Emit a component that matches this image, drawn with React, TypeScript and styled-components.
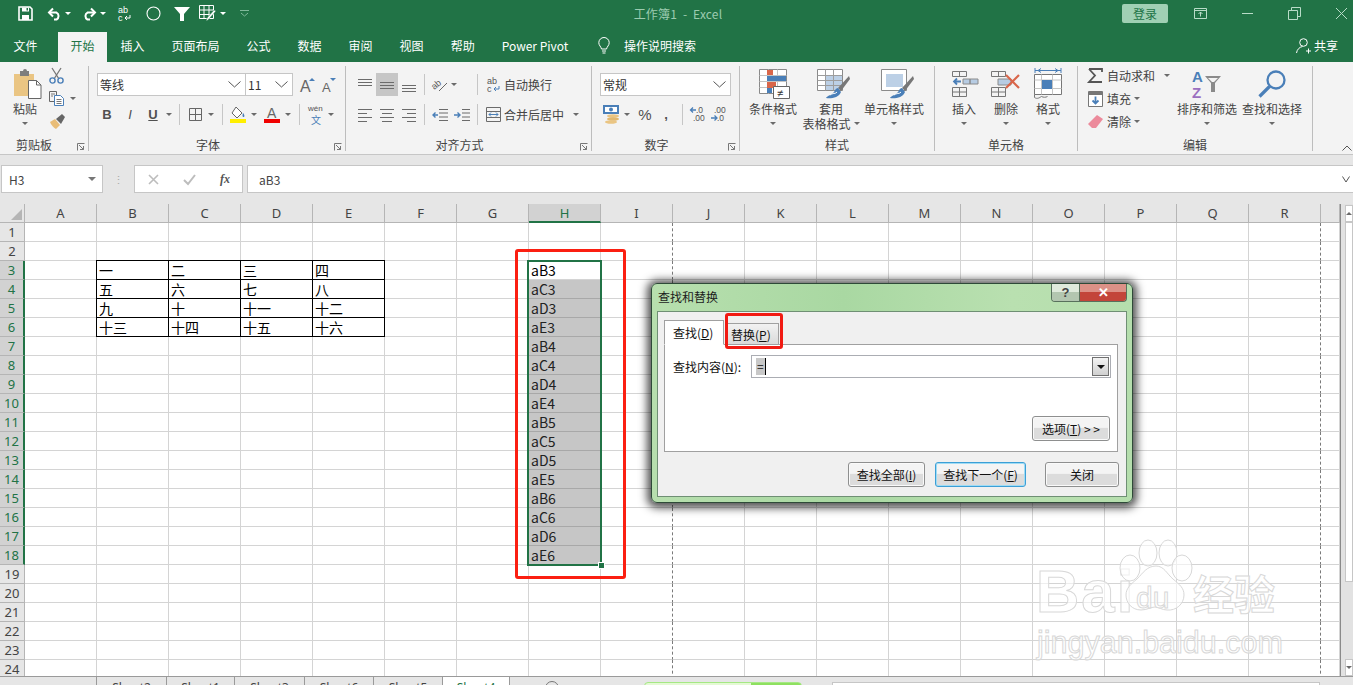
import React from 'react';
import styled, { createGlobalStyle } from 'styled-components';

const GREEN = '#217346';
const BLUE = '#4a7fb8';
const RED = '#d9664a';
const UI_FONT = '"Noto Sans CJK SC", "Noto Sans", sans-serif';

const GlobalStyle = createGlobalStyle`
  html, body { margin: 0; padding: 0; background: #fff; }
  body { font-family: ${UI_FONT}; font-size: 12px; color: #444; }
  * { box-sizing: border-box; }
`;

const Page = styled.div`
  position: relative;
  width: 1353px;
  height: 685px;
  overflow: hidden;
  display: flex;
  flex-direction: column;
  background: #fff;
`;

/* ---------- title bar ---------- */
const TitleBar = styled.div`
  height: 32px;
  flex: none;
  padding-bottom: 5px;
  background: ${GREEN};
  display: grid;
  grid-template-columns: 1fr auto 1fr;
  align-items: center;
`;
const Qat = styled.div`
  display: flex;
  align-items: center;
  padding-left: 18px;
`;
const QatSlot = styled.div<{ $ml?: number }>`
  display: flex;
  margin-left: ${(p) => p.$ml ?? 0}px;
`;
const WhiteCaret = styled.span<{ $ml?: number }>`
  width: 0;
  height: 0;
  margin-left: ${(p) => p.$ml ?? 3}px;
  border: 3px solid transparent;
  border-top: 3px solid #fff;
  border-bottom: 0;
`;
const WindowTitle = styled.div`
  color: #9ccbb0;
  font-size: 12px;
  margin-left: 3px;
  letter-spacing: 0.2px;
  white-space: pre;
`;
const WindowControls = styled.div`
  display: flex;
  align-items: center;
  justify-content: flex-end;
  padding-right: 5px;
`;
const LoginButton = styled.div`
  width: 46px;
  height: 19px;
  line-height: 19px;
  margin-right: 26px;
  border-radius: 2px;
  text-align: center;
  background: #a0d0b4;
  color: ${GREEN};
`;
const WinIcon = styled.svg<{ $ml?: number }>`
  width: 13px;
  height: 13px;
  margin-left: ${(p) => p.$ml ?? 0}px;
  fill: none;
  stroke: #b9dcc8;
`;

/* ---------- tabs ---------- */
const TabRow = styled.div`
  height: 30px;
  flex: none;
  background: ${GREEN};
  display: flex;
  align-items: stretch;
`;
const Tab = styled.div<{ $active?: boolean; $ml?: number }>`
  display: flex;
  align-items: center;
  padding: 0 ${(p) => (p.$active ? 12.5 : 13.5)}px 3px;
  margin-left: ${(p) => p.$ml ?? 0}px;
  background: ${(p) => (p.$active ? '#f3f3f3' : 'transparent')};
  color: ${(p) => (p.$active ? GREEN : '#fff')};
  white-space: nowrap;
`;
const SearchHint = styled.div`
  display: flex;
  align-items: center;
  gap: 14px;
  margin-left: 16px;
  padding-bottom: 3px;
  color: #fff;
`;
const ShareButton = styled.div`
  margin-left: auto;
  padding: 0 15px 3px 0;
  display: flex;
  align-items: center;
  gap: 3px;
  color: #fff;
`;

/* ---------- ribbon ---------- */
const Ribbon = styled.div`
  position: relative;
  height: 93px;
  flex: none;
  padding-top: 4px;
  background: #f3f3f3;
  border-bottom: 1px solid #c6c6c6;
  display: flex;
`;
const Group = styled.div<{ $w: number }>`
  width: ${(p) => p.$w}px;
  height: 85px;
  border-right: 1px solid #bdbdbd;
  display: flex;
  flex-direction: column;
  flex: none;
`;
const GroupBody = styled.div<{ $pl?: number }>`
  height: 72px;
  padding-left: ${(p) => p.$pl ?? 0}px;
  display: flex;
  align-items: flex-start;
`;
const GroupBodyStacked = styled.div<{ $pl: number }>`
  height: 72px;
  padding: 7px 0 0 ${(p) => p.$pl}px;
`;
const GroupFoot = styled.div<{ $pr?: number }>`
  position: relative;
  height: 13px;
  line-height: 14px;
  text-align: center;
  padding-right: ${(p) => p.$pr ?? 0}px;
`;
const Launcher = styled.svg`
  position: absolute;
  right: 3px;
  bottom: 0;
  width: 8px;
  height: 8px;
  fill: none;
  stroke: #777;
`;
const ToolRow = styled.div<{ $mt?: number }>`
  display: flex;
  align-items: center;
  height: 23px;
  margin-top: ${(p) => p.$mt ?? 0}px;
`;
const Combo = styled.div<{ $w: number; $ml?: number }>`
  width: ${(p) => p.$w}px;
  height: 23px;
  flex: none;
  margin-left: ${(p) => p.$ml ?? 0}px;
  padding: 0 4px 0 2px;
  background: #fff;
  border: 1px solid #c6c6c6;
  display: flex;
  align-items: center;
  justify-content: space-between;
  color: #333;
`;
const Tool = styled.div<{ $w?: number; $ml?: number; $active?: boolean }>`
  width: ${(p) => p.$w ?? 22}px;
  height: 23px;
  margin-left: ${(p) => p.$ml ?? 0}px;
  flex: none;
  display: flex;
  align-items: center;
  justify-content: center;
  background: ${(p) => (p.$active ? '#c6c6c6' : 'transparent')};
`;
const Glyph = styled.span<{ $bold?: boolean; $italic?: boolean; $under?: boolean; $big?: boolean }>`
  font-family: "Liberation Sans", sans-serif;
  font-size: ${(p) => (p.$big ? 15 : 13)}px;
  color: #505050;
  font-weight: ${(p) => (p.$bold ? 700 : 400)};
  font-style: ${(p) => (p.$italic ? 'italic' : 'normal')};
  text-decoration: ${(p) => (p.$under ? 'underline' : 'none')};
`;
const Caret = styled.span<{ $ml?: number; $up?: boolean }>`
  flex: none;
  width: 0;
  height: 0;
  margin-left: ${(p) => p.$ml ?? 2}px;
  border: 3px solid transparent;
  border-top: ${(p) => (p.$up ? '0' : '3px solid #6a6a6a')};
  border-bottom: ${(p) => (p.$up ? '3px solid #6a6a6a' : '0')};
`;
const NameCaret = styled.span`
  width: 0;
  height: 0;
  border: 4px solid transparent;
  border-top: 4px solid #777;
  border-bottom: 0;
`;
const VSep = styled.span<{ $ml?: number }>`
  flex: none;
  width: 1px;
  height: 21px;
  margin-left: ${(p) => p.$ml ?? 0}px;
  background: #c6c6c6;
`;
const ToolText = styled.span<{ $ml?: number }>`
  margin-left: ${(p) => p.$ml ?? 0}px;
  white-space: nowrap;
  color: #444;
`;
const BigTool = styled.div<{ $w: number; $ml?: number }>`
  width: ${(p) => p.$w}px;
  margin-left: ${(p) => p.$ml ?? 0}px;
  flex: none;
  display: flex;
  flex-direction: column;
  align-items: center;
`;
const BigIcon = styled.div<{ $shift?: number }>`
  height: 35px;
  padding-left: ${(p) => p.$shift ?? 0}px;
  display: flex;
  align-items: center;
  justify-content: center;
`;
const BigLabel = styled.div`
  height: 15px;
  line-height: 15px;
  white-space: nowrap;
  display: flex;
  align-items: center;
  justify-content: center;
`;
const CaretLine = styled.div`
  height: 15px;
  display: flex;
  align-items: center;
`;
const SmallColumn = styled.div<{ $w: number; $pl?: number; $mt?: number }>`
  width: ${(p) => p.$w}px;
  flex: none;
  padding-left: ${(p) => p.$pl ?? 0}px;
  margin-top: ${(p) => p.$mt ?? 0}px;
  display: flex;
  flex-direction: column;
`;
const CollapseIcon = styled.svg`
  position: absolute;
  right: 1px;
  bottom: 3px;
  width: 10px;
  height: 6px;
  fill: none;
  stroke: #555;
`;

/* ---------- formula bar ---------- */
const FormulaBar = styled.div`
  height: 49px;
  flex: none;
  padding: 10px 0 11px 1px;
  background: #e6e6e6;
  display: flex;
`;
const NameBox = styled.div`
  width: 102px;
  background: #fff;
  border: 1px solid #c6c6c6;
  padding: 0 6px 0 7px;
  display: flex;
  align-items: center;
  justify-content: space-between;
  color: #444;
`;
const GripDots = styled.div`
  width: 31px;
  display: flex;
  align-items: center;
  justify-content: center;
  color: #aaa;
  font-size: 11px;
`;
const FxButtons = styled.div`
  width: 109px;
  background: #fff;
  border: 1px solid #c6c6c6;
  display: grid;
  grid-template-columns: repeat(3, 36px);
  align-items: center;
  justify-items: center;
  font-family: "Liberation Serif", serif;
  font-style: italic;
  font-weight: 700;
  color: #555;
`;
const FormulaInput = styled.div`
  flex: 1;
  margin-left: 4px;
  background: #fff;
  border-top: 1px solid #c6c6c6;
  border-bottom: 1px solid #c6c6c6;
  border-left: 1px solid #c6c6c6;
  padding: 0 3px 0 11px;
  display: flex;
  align-items: center;
  justify-content: space-between;
  color: #444;
`;

/* ---------- sheet ---------- */
const SheetArea = styled.div`
  position: relative;
  height: 472px;
  flex: none;
  display: flex;
  background: #fff;
`;
const SheetGrid = styled.div`
  width: 1341px;
  height: 472px;
  overflow: hidden;
  border-right: 1px solid #8a8a8a;
  display: grid;
  grid-template-columns: 25px repeat(18, 72px) 19px;
  grid-auto-rows: 19px;
  font-size: 14px;
  color: #000;
`;
const Corner = styled.div`
  background: #e6e6e6;
  border-right: 1px solid #b5b5b5;
  border-bottom: 1px solid #b5b5b5;
  display: flex;
  align-items: flex-end;
  justify-content: flex-end;
  padding: 0 2px 2px 0;
`;
const ColHead = styled.div<{ $on?: boolean }>`
  background: ${(p) => (p.$on ? '#d2d2d2' : '#e6e6e6')};
  color: ${(p) => (p.$on ? GREEN : '#444')};
  border-right: 1px solid #b5b5b5;
  border-bottom: ${(p) => (p.$on ? `2px solid ${GREEN}` : '1px solid #b5b5b5')};
  font-family: "Noto Sans", sans-serif;
  font-size: 13px;
  line-height: 18px;
  text-align: center;
`;
const RowHead = styled.div<{ $on?: boolean }>`
  background: ${(p) => (p.$on ? '#d2d2d2' : '#e6e6e6')};
  color: ${(p) => (p.$on ? GREEN : '#444')};
  border-right: ${(p) => (p.$on ? `2px solid ${GREEN}` : '1px solid #b5b5b5')};
  border-bottom: 1px solid #b5b5b5;
  font-family: "Noto Sans", sans-serif;
  font-size: 13px;
  line-height: 18px;
  text-align: center;
`;
const Cell = styled.div<{ $boxed?: boolean; $dashed?: boolean; $shaded?: boolean }>`
  padding-left: 2px;
  line-height: 19px;
  overflow: hidden;
  white-space: nowrap;
  color: ${(p) => (p.$shaded ? '#222' : '#000')};
  border-right: 1px ${(p) => (p.$dashed ? 'dashed #7a7a7a' : 'solid #d4d4d4')};
  border-bottom: 1px solid #d4d4d4;
  ${(p) => p.$boxed && 'border-color: #000; box-shadow: -1px 0 #000, 0 -1px #000, -1px -1px #000;'}
  ${(p) =>
    p.$shaded &&
    'background: #c6c6c6; border-right-color: #c6c6c6; border-bottom-color: #a8a8a8;'}
`;
const SelectionFrame = styled.div`
  position: absolute;
  left: 527px;
  top: 56px;
  width: 75px;
  height: 306px;
  border: 2px solid ${GREEN};
`;
const FillHandle = styled.span`
  position: absolute;
  right: -5px;
  bottom: -5px;
  width: 7px;
  height: 7px;
  background: ${GREEN};
  border: 1px solid #fff;
`;
const RedFrame = styled.div`
  position: absolute;
  left: 515px;
  top: 45px;
  width: 111px;
  height: 330px;
  border: 3px solid #fb1f11;
  border-radius: 3px;
`;
const VScroll = styled.div`
  width: 12px;
  height: 472px;
  padding-left: 4px;
  background: #e2e2e2;
  display: flex;
  flex-direction: column;
`;
const VScrollThumb = styled.div`
  height: 360px;
  background: #fff;
  border: 1px solid #c6c6c6;
`;
const VScrollButton = styled.div<{ $up?: boolean }>`
  height: 17px;
  flex: none;
  margin-top: ${(p) => (p.$up ? '1px' : 'auto')};
  background: #fff;
  border: 1px solid #c6c6c6;
  display: flex;
  align-items: center;
  justify-content: center;
`;

/* ---------- sheet tabs ---------- */
const StatusBar = styled.div`
  height: 9px;
  flex: none;
  overflow: hidden;
  background: #e6e6e6;
  border-top: 1px solid #9a9a9a;
  display: flex;
  align-items: flex-start;
  padding-left: 96px;
`;
const SheetTab = styled.div<{ $w: number; $active?: boolean }>`
  width: ${(p) => p.$w}px;
  height: 20px;
  flex: none;
  padding-top: 4px;
  text-align: center;
  line-height: 14px;
  font-family: "Noto Sans", sans-serif;
  font-size: 12px;
  background: ${(p) => (p.$active ? '#fff' : 'transparent')};
  color: ${(p) => (p.$active ? GREEN : '#444')};
  border-left: 1px solid #9a9a9a;
  border-right: ${(p) => (p.$active ? '1px solid #9a9a9a' : '0')};
`;
const AddSheet = styled.span`
  width: 14px;
  height: 14px;
  flex: none;
  margin: 4px 0 0 35px;
  border: 1px solid #777;
  border-radius: 50%;
`;
const GlitchBar = styled.span`
  width: 158px;
  height: 6px;
  flex: none;
  margin: 5px 0 0 85px;
  border-radius: 4px 4px 0 0;
  background: linear-gradient(90deg, #e4f9d4 0 68%, #8ee060 68% 100%);
  border: 1px solid #a5e884;
`;
const HScroll = styled.span`
  width: 488px;
  height: 6px;
  flex: none;
  margin: 5px 0 0 30px;
  background: #fff;
  border: 1px solid #c6c6c6;
`;

/* ---------- dialog ---------- */
const Dialog = styled.div`
  position: absolute;
  left: 651px;
  top: 283px;
  width: 482px;
  height: 220px;
  padding: 0 5px 5px;
  border: 1px solid #2e4a38;
  border-radius: 6px;
  background: linear-gradient(90deg, #b7dfae 0%, #a9d8a2 40%, #b9e0b0 75%, #b5dead 100%);
  box-shadow: 0 1px 8px 4px rgba(0, 0, 0, 0.68);
  display: flex;
  flex-direction: column;
  color: #111;
`;
const DialogTitleRow = styled.div`
  height: 27px;
  flex: none;
  display: flex;
  justify-content: space-between;
  align-items: flex-start;
`;
const DialogTitle = styled.div`
  margin: 4px 0 0 1px;
  color: #1c1c1c;
`;
const CaptionButtons = styled.div`
  display: flex;
  height: 18px;
  border: 1px solid #58705c;
  border-top: 0;
  border-radius: 0 0 4px 4px;
  overflow: hidden;
`;
const CaptionButton = styled.div<{ $close?: boolean; $w: number }>`
  width: ${(p) => p.$w}px;
  display: flex;
  align-items: center;
  justify-content: center;
  font-family: "Liberation Sans", sans-serif;
  font-weight: 700;
  font-size: 13px;
  line-height: 1;
  color: ${(p) => (p.$close ? '#fff' : '#444')};
  background: ${(p) =>
    p.$close
      ? 'linear-gradient(#dc9187 0 45%, #c3453a 50% 100%)'
      : 'linear-gradient(#dfeadc 0 45%, #b3c6b0 50% 100%)'};
  border-left: ${(p) => (p.$close ? '1px solid #58705c' : '0')};
`;
const DialogInner = styled.div`
  flex: 1;
  background: #f0f0f0;
  border: 1px solid #6f8f74;
  padding: 8px 8px 0 6px;
  position: relative;
  display: flex;
  flex-direction: column;
`;
const DialogTabs = styled.div`
  height: 25px;
  flex: none;
  display: flex;
  align-items: flex-end;
  position: relative;
  z-index: 1;
  margin-bottom: -1px;
`;
const DialogTab = styled.div<{ $active?: boolean }>`
  height: ${(p) => (p.$active ? 25 : 22)}px;
  width: ${(p) => (p.$active ? 60 : 54)}px;
  padding-left: ${(p) => (p.$active ? 8 : 5)}px;
  line-height: ${(p) => (p.$active ? 23 : 21)}px;
  border: 1px solid #a0a0a0;
  border-bottom: ${(p) => (p.$active ? '1px solid #fff' : '1px solid #a0a0a0')};
  margin-left: ${(p) => (p.$active ? 0 : 1)}px;
  background: ${(p) => (p.$active ? '#fff' : 'linear-gradient(#f2f2f2, #dadada)')};
  color: #111;
`;
const DialogPanel = styled.div`
  height: 108px;
  flex: none;
  background: #fff;
  border: 1px solid #a0a0a0;
  padding: 10px 6px 10px 8px;
  display: flex;
  flex-direction: column;
`;
const FindRow = styled.div`
  display: flex;
  align-items: center;
  height: 23px;
`;
const FindLabel = styled.div`
  width: 78px;
  flex: none;
`;
const FindInput = styled.div`
  flex: 1;
  height: 23px;
  border: 1px solid #abadb3;
  padding: 0 1px 0 4px;
  display: flex;
  align-items: center;
  justify-content: space-between;
`;
const SelectedText = styled.span`
  display: inline-block;
  height: 17px;
  line-height: 16px;
  padding: 0 1px;
  background: #c8c8c8;
  border-right: 1px solid #000;
  color: #111;
`;
const DropButton = styled.div`
  width: 17px;
  height: 19px;
  border: 1px solid #707070;
  background: linear-gradient(#f3f3f3, #d0d0d0);
  display: flex;
  align-items: center;
  justify-content: center;
`;
const BlackCaret = styled.span`
  border: 4px solid transparent;
  border-top: 4px solid #111;
  border-bottom: 0;
`;
const WinButton = styled.div<{ $w: number; $primary?: boolean; $ml?: number }>`
  width: ${(p) => p.$w}px;
  height: 25px;
  margin-left: ${(p) => p.$ml ?? 0}px;
  border: 1px solid ${(p) => (p.$primary ? '#3c9fd6' : '#8e8f8f')};
  border-radius: 3px;
  background: linear-gradient(#f4f4f4 0 45%, #dcdcdc 50% 100%);
  box-shadow: ${(p) => (p.$primary ? 'inset 0 0 0 1px #9fdcf5' : 'inset 0 0 0 1px #fafafa')};
  display: flex;
  align-items: center;
  justify-content: center;
  color: #111;
  white-space: pre;
`;
const OptionsRow = styled.div`
  margin-top: auto;
  padding-right: 1px;
  display: flex;
  justify-content: flex-end;
`;
const DialogFooter = styled.div`
  margin: 10px -1px 0 0;
  display: flex;
  justify-content: flex-end;
`;
const TabHighlight = styled.div`
  position: absolute;
  left: 67px;
  top: 1px;
  width: 58px;
  height: 36px;
  border: 3px solid #f11a12;
  border-radius: 3px;
  z-index: 2;
`;

/* ---------- watermark ---------- */
const Watermark = styled.div`
  position: absolute;
  left: 1036px;
  top: 340px;
  width: 250px;
  height: 120px;
  pointer-events: none;
  color: rgba(255, 255, 255, 0.6);
  -webkit-text-stroke: 1px #d8d8d8;
`;
const MarkBai = styled.span`
  position: absolute;
  left: 0;
  top: 18px;
  font: 700 60px/60px "Liberation Sans", sans-serif;
  letter-spacing: 2px;
`;
const MarkJing = styled.span`
  position: absolute;
  left: 157px;
  top: 24px;
  font: 700 41px/48px "Noto Sans CJK SC", sans-serif;
`;
const MarkUrl = styled.span`
  position: absolute;
  left: 1px;
  top: 78px;
  font: 400 30.5px/40px "Liberation Sans", sans-serif;
`;
const MarkPaw = styled.svg`
  position: absolute;
  left: 84px;
  top: -4px;
  width: 76px;
  height: 76px;
  fill: rgba(255, 255, 255, 0.6);
  stroke: #d8d8d8;
  overflow: visible;
`;
const MarkDu = styled.span`
  position: absolute;
  left: 100px;
  top: 38px;
  font: 400 30px/32px "Liberation Sans", sans-serif;
`;

/* ---------- icons ---------- */
const Svg = ({ w, h, children }: { w: number; h: number; children: React.ReactNode }) => (
  <svg width={w} height={h} viewBox={`0 0 ${w} ${h}`} fill="none" style={{ display: 'block', overflow: 'visible' }}>
    {children}
  </svg>
);

const SaveIcon = () => (
  <Svg w={15} h={15}>
    <path d="M1 1h11l2 2v11H1z" stroke="#fff" strokeWidth="1.6" />
    <path d="M4 1.5h7v4H4zM4 9h7v5H4z" fill="#fff" />
    <path d="M8.5 2h1.5v2.5H8.5z" fill={GREEN} />
  </Svg>
);
const UndoIcon = ({ flip }: { flip?: boolean }) => (
  <Svg w={15} h={13}>
    <g transform={flip ? 'translate(15 0) scale(-1 1)' : undefined} stroke="#fff" strokeWidth="2">
      <path d="M6 1.5 2 5.5l4 4" />
      <path d="M2.5 5.5h7a4 4 0 0 1 0 7H7" />
    </g>
  </Svg>
);
const WrapTextIcon = ({ color, accent }: { color: string; accent: string }) => (
  <Svg w={13} h={15}>
    <text x="0" y="7" fontSize="9" fontFamily="Liberation Sans" fill={color}>ab</text>
    <text x="0" y="15" fontSize="9" fontFamily="Liberation Sans" fill={color}>c</text>
    <path d="M12 9v3H7m2-2-2 2 2 2" stroke={accent} />
  </Svg>
);
const CircleIcon = () => (
  <Svg w={15} h={15}>
    <circle cx="7.5" cy="7.5" r="6.5" stroke="#fff" strokeWidth="1.1" />
  </Svg>
);
const FunnelIcon = () => (
  <Svg w={16} h={15}>
    <path d="M0 1h16L10 8v7H6V8z" fill="#fff" />
  </Svg>
);
const GridBrushIcon = () => (
  <Svg w={18} h={17}>
    <path d="M.5.5h14v13H.5zM5 .5v13M10 .5v13M.5 5h14M.5 9.5h14" stroke="#fff" />
    <path d="M17 6 9 15l-2 1 1-3 7-8z" fill="#fff" stroke={GREEN} strokeWidth=".5" />
  </Svg>
);
const CustomizeIcon = () => (
  <Svg w={9} h={7}>
    <path d="M0 .5h9M1 3l3.5 3L8 3" stroke="#7fb99a" />
  </Svg>
);
const BulbIcon = () => (
  <Svg w={12} h={17}>
    <path d="M3.5 12C3 9.5.8 8.5.8 5.7a5.2 5.2 0 0 1 10.4 0c0 2.800-2.200 3.800-2.700 6.300z" stroke="#fff" />
    <path d="M4 14h4M4.500 16h3" stroke="#fff" />
  </Svg>
);
const ShareIcon = () => (
  <Svg w={15} h={16}>
    <circle cx="7.500" cy="4.500" r="3.800" stroke="#fff" />
    <path d="M.5 15c.5-3.500 3-6 6-6.500M10 13h5M12.500 10.500v5" stroke="#fff" />
  </Svg>
);
const PasteIcon = () => (
  <Svg w={29} h={31}>
    <path d="M1 6h20v22H1z" fill="#eac583" />
    <path d="M7 3h3a2 2 0 0 1 4 0h2v5H7z" fill="#7d7d7d" />
    <path d="M15.500 12.500h8l4.500 4.500v13.500H15.500z" fill="#fff" stroke="#666" />
    <path d="M23.500 12.500V17H28" stroke="#666" />
  </Svg>
);
const CutIcon = () => (
  <Svg w={15} h={16}>
    <path d="M3 0l7 11M12 0 5 11" stroke="#777" strokeWidth="1.300" />
    <circle cx="3.500" cy="12.500" r="2.600" stroke={BLUE} strokeWidth="1.400" />
    <circle cx="11.500" cy="12.500" r="2.600" stroke={BLUE} strokeWidth="1.400" />
  </Svg>
);
const CopyIcon = () => (
  <Svg w={15} h={15}>
    <path d="M.5.500h7v10h-7z" fill="#f3f3f3" stroke="#666" />
    <path d="M5.500 4.500h6l3 3v7h-9z" fill="#fff" stroke={BLUE} />
    <path d="M2 3h4M2 5h2M7.500 8.500h5M7.500 10.500h5M7.500 12.500h5" stroke="#777" />
  </Svg>
);
const BrushIcon = () => (
  <Svg w={16} h={15}>
    <path d="M1 8l5-3 5 6-4 4C5 14 2 11 1 8z" fill="#e9bd77" />
    <path d="M7 5l6-5 3 3-4 7z" fill="#666" />
  </Svg>
);
const GrowFontIcon = ({ shrink }: { shrink?: boolean }) => (
  <Svg w={15} h={15}>
    <text x="0" y="15" fontSize={shrink ? 13 : 16} fontFamily="Liberation Sans" fill="#666">A</text>
    <path d={shrink ? 'M8 1h6l-3 3z' : 'M9 4h6l-3-3z'} fill={BLUE} />
  </Svg>
);
const BordersIcon = () => (
  <Svg w={13} h={13}>
    <path d="M.5.500h12v12H.500zM6.500.500v12M.500 6.500h12" stroke="#666" />
  </Svg>
);
const FillColorIcon = () => (
  <Svg w={16} h={17}>
    <path d="M6 1l6 6-5 5-5-5z" fill="#fff" stroke="#666" />
    <path d="M13 7c1.500 1.500 2 4 .5 4s-1-2.500-.5-4z" fill={BLUE} />
    <path d="M0 13h16v4H0z" fill="#ffef00" />
  </Svg>
);
const FontColorIcon = () => (
  <Svg w={16} h={17}>
    <text x="3" y="12" fontSize="14" fontFamily="Liberation Sans" fill="#666">A</text>
    <path d="M0 13h16v4H0z" fill="#f00000" />
  </Svg>
);
const PhoneticIcon = () => (
  <Svg w={16} h={18}>
    <text x="0" y="5" fontSize="8" fontFamily="Liberation Sans" fill="#555">wén</text>
    <text x="3" y="18" fontSize="10" fontFamily="Noto Sans CJK SC" fill={BLUE}>文</text>
  </Svg>
);
const LinesIcon = ({ rows, w = 14 }: { rows: [number, number, number][]; w?: number }) => (
  <Svg w={w} h={w}>
    {rows.map(([x, y, l], i) => (
      <path key={i} d={`M${x} ${y + 0.5}h${l}`} stroke="#6b6b6b" />
    ))}
  </Svg>
);
const OrientationIcon = () => (
  <Svg w={16} h={15}>
    <text x="0" y="11" fontSize="9" fontFamily="Liberation Sans" fill="#555" transform="rotate(-40 4 9)">ab</text>
    <path d="M7 14 15 6" stroke="#666" />
  </Svg>
);
const IndentIcon = ({ out }: { out?: boolean }) => (
  <Svg w={16} h={12}>
    <path d={out ? 'M7 .5h9M7 4h9M7 8h9M7 11.500h9' : 'M8 .5h8M8 4h8M8 8h8M8 11.500h8'} stroke="#6b6b6b" />
    <path d={out ? 'M6 6H1m2.500-2.500L1 6l2.500 2.500' : 'M0 6h6M3.500 3.500 6 6 3.500 8.500'} stroke={BLUE} strokeWidth="1.400" />
  </Svg>
);
const MergeIcon = () => (
  <Svg w={15} h={15}>
    <path d="M.5.500h14v14H.500zM.500 4.500h14M.500 10.500h14" stroke="#6b6b6b" />
    <path d="M3 7.500h9M5 5.500l-2 2 2 2M10 5.500l2 2-2 2" stroke={BLUE} />
  </Svg>
);
const ChevronDown = ({ w = 13 }: { w?: number }) => (
  <Svg w={w} h={7}>
    <path d={`M.5.500 ${w / 2} 6 ${w - 0.5} .5`} stroke="#555" />
  </Svg>
);
const AccountingIcon = () => (
  <Svg w={17} h={19}>
    <path d="M0 0h16v9H0z" fill={BLUE} />
    <path d="M2 2h12v5H2z" fill="#fff" />
    <circle cx="8" cy="4.500" r="2" fill={BLUE} />
    <ellipse cx="10" cy="11" rx="6" ry="1.800" fill="#eac583" />
    <ellipse cx="10" cy="14" rx="6" ry="1.800" fill="#e2b86e" />
    <ellipse cx="8" cy="17" rx="6" ry="1.800" fill="#eac583" />
  </Svg>
);
const DecimalIcon = ({ more }: { more?: boolean }) => (
  <Svg w={17} h={15}>
    <text x={more ? 3 : 6} y="6" fontSize="8.500" fontFamily="Liberation Sans" fill="#555">{more ? '.00' : '.0'}</text>
    <text x={more ? 6 : 3} y="14" fontSize="8.500" fontFamily="Liberation Sans" fill="#555">{more ? '.0' : '.00'}</text>
    <path d={more ? 'M0 11h6M3.500 8.500 6 11l-2.500 2.500' : 'M6 3H.5M3 .5.500 3 3 5.500'} stroke={BLUE} strokeWidth="1.300" />
  </Svg>
);
const CondFormatIcon = () => (
  <Svg w={31} h={30}>
    <path d="M.5.500h27v24H.500z" fill="#fff" stroke="#8a8a8a" />
    <path d="M9.500.500v24M18.500.500v24M.500 6.500h27M.500 12.500h27M.500 18.500h27" stroke="#c4c4c4" />
    <path d="M8 1h6v5H8zM8 13h9v6H8z" fill={RED} />
    <path d="M8 7h19v5H8zM8 19h5v5H8z" fill={BLUE} />
    <path d="M14.500 17.500h16v12h-16z" fill="#fff" stroke="#666" />
    <text x="18" y="28" fontSize="11" fontFamily="Liberation Sans" fill="#333">≠</text>
  </Svg>
);
const TableFormatIcon = ({ cellOnly }: { cellOnly?: boolean }) => (
  <Svg w={34} h={30}>
    <path d="M.5.500h25v21H.500z" fill="#fff" stroke="#8a8a8a" />
    <path d={cellOnly ? 'M5 5h17v13H5z' : 'M8 6h17v15H8z'} fill="#bcd0e6" />
    {!cellOnly && <path d="M8.500.500v21M16.500.500v21M.500 6.500h25M.500 11.500h25M.500 16.500h25" stroke="#9d9d9d" />}
    <path d="M32 7 21 19l3 3 9-12z" fill="#777" />
    <path d="M21 19c-3 0-3 4-5 5-2 2-6 3-7 5 4 1 13 0 15-6z" fill={BLUE} />
    <path d="M13 26c2-2 6-1 7-3" stroke="#fff" />
  </Svg>
);
const InsertIcon = ({ remove }: { remove?: boolean }) => (
  <Svg w={30} h={26}>
    <path d="M.5.500h14v5H.500zM7.500.500v5M.500 16.500h14v9H.500zM.500 21h14M7.500 16.500v9" stroke="#777" />
    {remove ? (
      <>
        <path d="M7 8h13v6H7z" fill="#b7cce3" stroke="#8a8a8a" />
        <path d="M15 4l13 13M28 4 15 17" stroke={RED} strokeWidth="2.200" />
      </>
    ) : (
      <>
        <path d="M11 8h7v5h-7zM18 8h8v5h-8z" fill="#b7cce3" stroke="#8a8a8a" />
        <path d="M9 10.500H2M5 7.500l-3 3 3 3" stroke={BLUE} strokeWidth="1.800" />
      </>
    )}
  </Svg>
);
const FormatCellsIcon = () => (
  <Svg w={28} h={34}>
    <path d="M1 3.500h26M1 1v5M27 1v5M4 3.500l3-2M4 3.500l3 2M24 3.500l-3-2M24 3.500l-3 2" stroke={BLUE} />
    <path d="M.5 7.500h27v20H.500z" fill="#fff" stroke="#777" />
    <path d="M7.500 7.500v20M18.500 7.500v20M.500 13h27M.500 21.500h27" stroke="#c4c4c4" />
    <path d="M8 13h10v9H8z" fill={BLUE} />
    <path d="M.5 27.500v3c3 2 5 0 7-1 2 1 4 1 6 0" stroke="#777" />
  </Svg>
);
const SumIcon = () => (
  <Svg w={15} h={15}>
    <path d="M1 1h13v3M14 14H1l6-6.500L1 1" stroke="#555" strokeWidth="1.800" />
  </Svg>
);
const FillDownIcon = () => (
  <Svg w={15} h={16}>
    <path d="M.5.500h14v15H.500z" fill="#fff" stroke="#777" />
    <path d="M1 1h13v3H1z" fill="#777" />
    <path d="M7.500 5.500v7M4.500 9.500l3 3 3-3" stroke={BLUE} strokeWidth="1.800" />
  </Svg>
);
const EraserIcon = () => (
  <Svg w={15} h={13}>
    <path d="M9 0l6 4-7 9H4L0 9z" fill="#ec8a9b" />
  </Svg>
);
const SortIcon = () => (
  <Svg w={30} h={31}>
    <text x="0" y="14" fontSize="15" fontWeight="700" fontFamily="Liberation Sans" fill={BLUE}>A</text>
    <text x="0" y="30" fontSize="15" fontWeight="700" fontFamily="Liberation Sans" fill="#9b6fc0">Z</text>
    <path d="M13 8h16l-6 7v9h-4v-9z" fill="#8a8a8a" />
    <path d="M16 10h10l-4 4h-2z" fill="#f3f3f3" />
  </Svg>
);
const SearchIcon = () => (
  <Svg w={28} h={28}>
    <circle cx="18" cy="10" r="8.500" stroke={BLUE} strokeWidth="2.300" />
    <path d="M11.500 16.500 1.500 26.500" stroke={BLUE} strokeWidth="3.200" />
  </Svg>
);
const LauncherGlyph = () => (
  <Launcher viewBox="0 0 8 8">
    <path d="M.5 7.500v-7h7M2 2l4.500 4.500M3 6.500h3.500V3" />
  </Launcher>
);

/* ---------- data ---------- */
const COLS = 'ABCDEFGHIJKLMNOPQR'.split('');
const ROWS = Array.from({ length: 24 }, (_, i) => i + 1);
const TABLE: Record<string, string> = {
  B3: '一', C3: '二', D3: '三', E3: '四',
  B4: '五', C4: '六', D4: '七', E4: '八',
  B5: '九', C5: '十', D5: '十一', E5: '十二',
  B6: '十三', C6: '十四', D6: '十五', E6: '十六',
};
const SELECTION = [3, 4, 5, 6].flatMap((n) => ['B', 'C', 'D', 'E'].map((l) => `a${l}${n}`));
const isBoxed = (col: string, row: number) => 'BCDE'.includes(col) && row >= 3 && row <= 6;
const isSelected = (col: string, row: number) => col === 'H' && row >= 3 && row <= 18;

const VALIGN_TOP: [number, number, number][] = [[0, 1, 14], [0, 4, 14], [0, 7, 14]];
const VALIGN_MID: [number, number, number][] = [[0, 4, 14], [0, 7, 14], [0, 10, 14]];
const VALIGN_BOT: [number, number, number][] = [[0, 7, 14], [0, 10, 14], [0, 13, 14]];
const ALIGN_LEFT: [number, number, number][] = [[0, 1, 14], [0, 5, 9], [0, 9, 14], [0, 13, 9]];
const ALIGN_CENTER: [number, number, number][] = [[0, 1, 14], [2, 5, 10], [0, 9, 14], [2, 13, 10]];
const ALIGN_RIGHT: [number, number, number][] = [[0, 1, 14], [5, 5, 9], [0, 9, 14], [5, 13, 9]];

export default function App() {
  return (
    <Page>
      <GlobalStyle />
      <TitleBar>
        <Qat>
          <SaveIcon />
          <QatSlot $ml={14}><UndoIcon /></QatSlot>
          <WhiteCaret />
          <QatSlot $ml={11}><UndoIcon flip /></QatSlot>
          <WhiteCaret />
          <QatSlot $ml={12}><WrapTextIcon color="#fff" accent="#fff" /></QatSlot>
          <QatSlot $ml={15}><CircleIcon /></QatSlot>
          <QatSlot $ml={13}><FunnelIcon /></QatSlot>
          <QatSlot $ml={9}><GridBrushIcon /></QatSlot>
          <WhiteCaret />
          <QatSlot $ml={14}><CustomizeIcon /></QatSlot>
        </Qat>
        <WindowTitle>工作簿1  -  Excel</WindowTitle>
        <WindowControls>
          <LoginButton>登录</LoginButton>
          <WinIcon viewBox="0 0 13 13"><path d="M.5 1.500h12v10H.500zM.500 3.500h12M6.500 9.500V5M4.500 7l2-2 2 2" /></WinIcon>
          <WinIcon viewBox="0 0 13 13" $ml={34}><path d="M1 6.500h11" /></WinIcon>
          <WinIcon viewBox="0 0 13 13" $ml={34}><path d="M.5 3.500h9v9h-9zM3.500 3.500v-3h9v9h-3" /></WinIcon>
          <WinIcon viewBox="0 0 13 13" $ml={34}><path d="M1 1l11 11M12 1 1 12" /></WinIcon>
        </WindowControls>
      </TitleBar>

      <TabRow>
        <Tab>文件</Tab>
        <Tab $active $ml={7}>开始</Tab>
        <Tab>插入</Tab>
        <Tab>页面布局</Tab>
        <Tab>公式</Tab>
        <Tab>数据</Tab>
        <Tab>审阅</Tab>
        <Tab>视图</Tab>
        <Tab>帮助</Tab>
        <Tab>Power Pivot</Tab>
        <SearchHint>
          <BulbIcon />
          操作说明搜索
        </SearchHint>
        <ShareButton>
          <ShareIcon />
          共享
        </ShareButton>
      </TabRow>

      <Ribbon>
        <Group $w={89}>
          <GroupBody>
            <BigTool $w={48} $ml={1}>
              <BigIcon $shift={4}><PasteIcon /></BigIcon>
              <BigLabel>粘贴</BigLabel>
              <CaretLine><Caret $ml={0} /></CaretLine>
            </BigTool>
            <SmallColumn $w={35} $mt={-2}>
              <ToolRow><CutIcon /></ToolRow>
              <ToolRow><CopyIcon /><Caret $ml={6} /></ToolRow>
              <ToolRow><BrushIcon /></ToolRow>
            </SmallColumn>
          </GroupBody>
          <GroupFoot $pr={20}>剪贴板<LauncherGlyph /></GroupFoot>
        </Group>

        <Group $w={257}>
          <GroupBodyStacked $pl={8}>
            <ToolRow>
              <Combo $w={149}>等线<ChevronDown /></Combo>
              <Combo $w={48} $ml={-1}>11<ChevronDown /></Combo>
              <Tool $ml={3}><GrowFontIcon /></Tool>
              <Tool><GrowFontIcon shrink /></Tool>
            </ToolRow>
            <ToolRow $mt={7}>
              <Tool $w={20}><Glyph $bold>B</Glyph></Tool>
              <Tool $w={24} $ml={1}><Glyph $italic>I</Glyph></Tool>
              <Tool $w={22}><Glyph $bold $under>U</Glyph></Tool>
              <Caret $ml={2} />
              <VSep $ml={7} />
              <Tool $w={20} $ml={5}><BordersIcon /></Tool>
              <Caret $ml={3} />
              <VSep $ml={8} />
              <Tool $w={22} $ml={4}><FillColorIcon /></Tool>
              <Caret $ml={2} />
              <Tool $w={22} $ml={4}><FontColorIcon /></Tool>
              <Caret $ml={2} />
              <VSep $ml={8} />
              <Tool $w={22} $ml={5}><PhoneticIcon /></Tool>
              <Caret $ml={1} />
            </ToolRow>
          </GroupBodyStacked>
          <GroupFoot $pr={18}>字体<LauncherGlyph /></GroupFoot>
        </Group>

        <Group $w={246}>
          <GroupBodyStacked $pl={8}>
            <ToolRow>
              <Tool><LinesIcon rows={VALIGN_TOP} /></Tool>
              <Tool $active><LinesIcon rows={VALIGN_MID} /></Tool>
              <Tool><LinesIcon rows={VALIGN_BOT} /></Tool>
              <VSep $ml={4} />
              <Tool $ml={4}><OrientationIcon /></Tool>
              <Caret $ml={0} />
              <VSep $ml={20} />
              <Tool $w={20} $ml={5}><WrapTextIcon color="#555" accent={BLUE} /></Tool>
              <ToolText $ml={1}>自动换行</ToolText>
            </ToolRow>
            <ToolRow $mt={7}>
              <Tool><LinesIcon rows={ALIGN_LEFT} /></Tool>
              <Tool><LinesIcon rows={ALIGN_CENTER} /></Tool>
              <Tool><LinesIcon rows={ALIGN_RIGHT} /></Tool>
              <VSep $ml={4} />
              <Tool $ml={4}><IndentIcon out /></Tool>
              <Tool><IndentIcon /></Tool>
              <VSep $ml={4} />
              <Tool $w={20} $ml={5}><MergeIcon /></Tool>
              <ToolText $ml={1}>合并后居中</ToolText>
              <Caret $ml={9} />
            </ToolRow>
          </GroupBodyStacked>
          <GroupFoot $pr={18}>对齐方式<LauncherGlyph /></GroupFoot>
        </Group>

        <Group $w={148}>
          <GroupBodyStacked $pl={8}>
            <ToolRow>
              <Combo $w={131}>常规<ChevronDown /></Combo>
            </ToolRow>
            <ToolRow $mt={7}>
              <Tool><AccountingIcon /></Tool>
              <Caret $ml={2} />
              <Tool $ml={4}><Glyph $big>%</Glyph></Tool>
              <Tool $w={20}><Glyph $bold>,</Glyph></Tool>
              <VSep $ml={6} />
              <Tool $w={20} $ml={5}><DecimalIcon /></Tool>
              <Tool $w={20} $ml={1}><DecimalIcon more /></Tool>
            </ToolRow>
          </GroupBodyStacked>
          <GroupFoot $pr={18}>数字<LauncherGlyph /></GroupFoot>
        </Group>

        <Group $w={195}>
          <GroupBody>
            <BigTool $w={66}>
              <BigIcon $shift={3}><CondFormatIcon /></BigIcon>
              <BigLabel>条件格式</BigLabel>
              <CaretLine><Caret $ml={0} /></CaretLine>
            </BigTool>
            <BigTool $w={50}>
              <BigIcon $shift={6}><TableFormatIcon /></BigIcon>
              <BigLabel>套用</BigLabel>
              <BigLabel>表格格式<Caret $ml={3} /></BigLabel>
            </BigTool>
            <BigTool $w={76}>
              <BigIcon $shift={8}><TableFormatIcon cellOnly /></BigIcon>
              <BigLabel>单元格样式</BigLabel>
              <CaretLine><Caret $ml={0} /></CaretLine>
            </BigTool>
          </GroupBody>
          <GroupFoot>样式</GroupFoot>
        </Group>

        <Group $w={143}>
          <GroupBody $pl={8}>
            <BigTool $w={42}>
              <BigIcon $shift={5}><InsertIcon /></BigIcon>
              <BigLabel>插入</BigLabel>
              <CaretLine><Caret $ml={0} /></CaretLine>
            </BigTool>
            <BigTool $w={42}>
              <BigIcon><InsertIcon remove /></BigIcon>
              <BigLabel>删除</BigLabel>
              <CaretLine><Caret $ml={0} /></CaretLine>
            </BigTool>
            <BigTool $w={42}>
              <BigIcon><FormatCellsIcon /></BigIcon>
              <BigLabel>格式</BigLabel>
              <CaretLine><Caret $ml={0} /></CaretLine>
            </BigTool>
          </GroupBody>
          <GroupFoot>单元格</GroupFoot>
        </Group>

        <Group $w={235}>
          <GroupBody>
            <SmallColumn $w={97} $pl={10} $mt={-2}>
              <ToolRow><SumIcon /><ToolText $ml={4}>自动求和</ToolText><Caret $ml={9} /></ToolRow>
              <ToolRow><FillDownIcon /><ToolText $ml={4}>填充</ToolText><Caret $ml={3} /></ToolRow>
              <ToolRow><EraserIcon /><ToolText $ml={4}>清除</ToolText><Caret $ml={3} /></ToolRow>
            </SmallColumn>
            <BigTool $w={64}>
              <BigIcon><SortIcon /></BigIcon>
              <BigLabel>排序和筛选</BigLabel>
              <CaretLine><Caret $ml={0} /></CaretLine>
            </BigTool>
            <BigTool $w={66}>
              <BigIcon><SearchIcon /></BigIcon>
              <BigLabel>查找和选择</BigLabel>
              <CaretLine><Caret $ml={0} /></CaretLine>
            </BigTool>
          </GroupBody>
          <GroupFoot>编辑</GroupFoot>
        </Group>
        <CollapseIcon viewBox="0 0 10 6"><path d="M.5 5.500 5 1l4.500 4.500" /></CollapseIcon>
      </Ribbon>

      <FormulaBar>
        <NameBox>H3<NameCaret /></NameBox>
        <GripDots>⋮</GripDots>
        <FxButtons>
          <Svg w={11} h={11}><path d="M1 1l9 9M10 1l-9 9" stroke="#bdbdbd" strokeWidth="1.600" /></Svg>
          <Svg w={13} h={11}><path d="M1 6l4 4 7-9" stroke="#bdbdbd" strokeWidth="2" /></Svg>
          <span>fx</span>
        </FxButtons>
        <FormulaInput>aB3<ChevronDown w={8} /></FormulaInput>
      </FormulaBar>

      <SheetArea>
        <SheetGrid>
          <Corner>
            <Svg w={11} h={11}><path d="M11 0v11H0z" fill="#b5b5b5" /></Svg>
          </Corner>
          {COLS.map((c) => (
            <ColHead key={c} $on={c === 'H'}>{c}</ColHead>
          ))}
          <ColHead />
          {ROWS.map((r) => (
            <React.Fragment key={r}>
              <RowHead $on={r >= 3 && r <= 18}>{r}</RowHead>
              {COLS.map((c) => (
                <Cell
                  key={c}
                  $boxed={isBoxed(c, r)}
                  $dashed={c === 'I' || c === 'R'}
                  $shaded={isSelected(c, r) && r > 3}
                >
                  {TABLE[`${c}${r}`] ?? (isSelected(c, r) ? SELECTION[r - 3] : '')}
                </Cell>
              ))}
              <Cell />
            </React.Fragment>
          ))}
        </SheetGrid>
        <VScroll>
          <VScrollButton $up><Caret $ml={0} $up /></VScrollButton>
          <VScrollThumb />
          <VScrollButton><Caret $ml={0} /></VScrollButton>
        </VScroll>
        <RedFrame />
        <SelectionFrame><FillHandle /></SelectionFrame>
        <Watermark>
          <MarkBai>Bai</MarkBai>
          <MarkPaw viewBox="0 0 76 76">
            <ellipse cx="10" cy="28" rx="10" ry="13" />
            <ellipse cx="28" cy="13" rx="9" ry="13" />
            <ellipse cx="48" cy="13" rx="9" ry="13" />
            <ellipse cx="62" cy="28" rx="10" ry="13" />
            <path d="M36 26c8 0 11 8 17 13 7 6 11 9 11 16 0 9-8 16-17 15-5 0-8-3-12-3s-8 3-14 3C12 70 6 63 6 55c0-7 5-11 11-16 6-6 10-13 19-13z" />
          </MarkPaw>
          <MarkDu>du</MarkDu>
          <MarkJing>经验</MarkJing>
          <MarkUrl>jingyan.baidu.com</MarkUrl>
        </Watermark>
      </SheetArea>

      <StatusBar>
        <SheetTab $w={70}>Sheet2</SheetTab>
        <SheetTab $w={68}>Sheet1</SheetTab>
        <SheetTab $w={70}>Sheet3</SheetTab>
        <SheetTab $w={69}>Sheet6</SheetTab>
        <SheetTab $w={69}>Sheet5</SheetTab>
        <SheetTab $w={68} $active>Sheet4</SheetTab>
        <AddSheet />
        <GlitchBar />
        <HScroll />
      </StatusBar>

      <Dialog>
        <DialogTitleRow>
          <DialogTitle>查找和替换</DialogTitle>
          <CaptionButtons>
            <CaptionButton $w={27}>?</CaptionButton>
            <CaptionButton $w={47} $close>✕</CaptionButton>
          </CaptionButtons>
        </DialogTitleRow>
        <DialogInner>
          <DialogTabs>
            <DialogTab $active>查找(<u>D</u>)</DialogTab>
            <DialogTab>替换(<u>P</u>)</DialogTab>
          </DialogTabs>
          <DialogPanel>
            <FindRow>
              <FindLabel>查找内容(<u>N</u>):</FindLabel>
              <FindInput>
                <SelectedText>=</SelectedText>
                <DropButton><BlackCaret /></DropButton>
              </FindInput>
            </FindRow>
            <OptionsRow>
              <WinButton $w={78}>选项(<u>T</u>) &gt; &gt;</WinButton>
            </OptionsRow>
          </DialogPanel>
          <DialogFooter>
            <WinButton $w={77}>查找全部(<u>I</u>)</WinButton>
            <WinButton $w={91} $ml={10} $primary>查找下一个(<u>F</u>)</WinButton>
            <WinButton $w={74} $ml={19}>关闭</WinButton>
          </DialogFooter>
          <TabHighlight />
        </DialogInner>
      </Dialog>
    </Page>
  );
}
